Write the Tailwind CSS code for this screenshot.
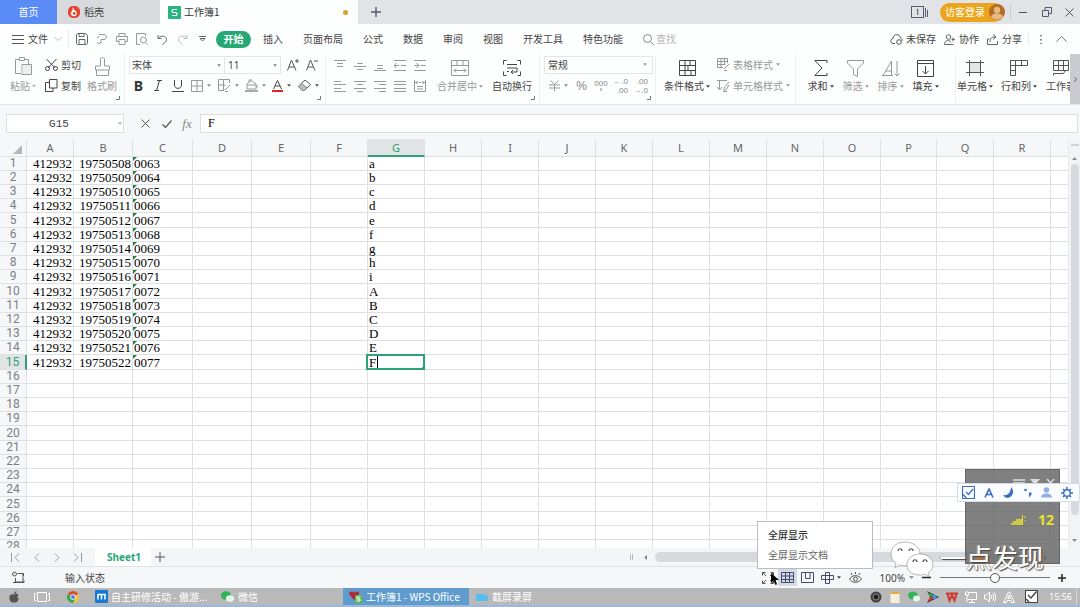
<!DOCTYPE html>
<html lang="zh-CN">
<head>
<meta charset="utf-8">
<title>工作簿1 - WPS Office</title>
<script src="https://cdn.jsdelivr.net/npm/@tailwindcss/browser@4"></script>
</head>
<body class="h-screen overflow-hidden bg-[#f5f7f9] font-['Noto_Sans_CJK_SC',sans-serif] text-[10px] leading-4 text-[#444]">
<svg class="hidden">
  <symbol id="dn" viewBox="0 0 5 3"><path d="M0 0h5L2.500 3z" fill="currentColor"/></symbol>
  <symbol id="corner" viewBox="0 0 5 5"><path d="M4.500 1v3.500H1" fill="none" stroke="#777"/></symbol>
</svg>
<div class="relative flex h-full flex-col whitespace-nowrap">

<!-- Title bar -->
<header class="flex h-6 shrink-0 items-center bg-[#e1e3e7]">
  <button class="h-full w-[57px] shrink-0 bg-[#5b8cf5] text-white">首页</button>
  <button class="flex h-full w-[103px] shrink-0 items-center gap-1 bg-[#d8dade] pl-[11px]">
    <svg class="size-3" viewBox="0 0 12 12"><rect width="12" height="12" rx="5" fill="#e8432a"/><path d="M4.500 1.500c2 1 1.500 2 2 2.700C9.500 5 10 10 6 10.200 2.500 10 2 7 4 5c.5-1 .8-2 .5-3.500z" fill="#fff"/><path d="M6 5.500L8 7.500 6 9.200 4.500 7.500z" fill="#e8432a"/></svg>
    稻壳</button>
  <button class="flex h-full w-[198px] shrink-0 items-center gap-[3px] bg-[#fdfefe] pr-[10px] pl-2 text-[#333]">
    <svg class="size-[13px]" viewBox="0 0 13 13"><rect width="13" height="13" rx="1" fill="#29b480"/><path d="M9 3.500H5.500c-2 0-2 3 0 3h2c2 0 2 3 0 3H4" fill="none" stroke="#fff" stroke-width="1.200"/></svg>
    工作簿1<span class="ml-auto size-[5px] rounded-full bg-[#d9a02c]"></span></button>
  <button aria-label="新建" class="flex w-9 shrink-0 justify-center"><svg class="size-[10px]" viewBox="0 0 10 10"><path d="M5 0v10M0 5h10" stroke="#555c78" stroke-width="1.400"/></svg></button>
  <div class="ml-auto flex h-full items-center">
    <button aria-label="窗口列表"><svg class="h-3 w-[17px]" viewBox="0 0 17 12" fill="none" stroke="#555c6e"><rect x=".5" y=".5" width="12" height="11"/><path d="M14.500 2v9M16.500 4v7M5.500 4l1.200-1v6"/></svg></button>
    <button class="mr-[6px] ml-3 flex h-[19px] w-[64px] items-center gap-1 rounded-full bg-[#eba51d] pl-[5px] text-white">访客登录
      <svg class="size-4 shrink-0" viewBox="0 0 16 16"><circle cx="8" cy="8" r="8" fill="#b36e23"/><circle cx="8" cy="6" r="3.200" fill="#e5b884"/><path d="M2 13c1-5 11-5 12 0a8 8 0 0 1-12 0z" fill="#e5b884"/></svg></button>
    <span class="h-4 border-l border-[#c9ccd0]"></span>
    <button aria-label="最小化" class="flex w-[25px] justify-center"><svg class="size-[9px]" viewBox="0 0 9 9"><path d="M0 4.500h8" stroke="#555"/></svg></button>
    <button aria-label="还原" class="flex w-[22px] justify-center"><svg class="size-[10px]" viewBox="0 0 10 10" fill="none" stroke="#555c6e"><path d="M.5 3.500h6v6h-6zM3 3V.5h6.500v6H7"/></svg></button>
    <button aria-label="关闭" class="flex w-[22px] justify-center"><svg class="size-[9px]" viewBox="0 0 9 9"><path d="M.5.500l8 8M8.500.500l-8 8" stroke="#555"/></svg></button>
  </div>
</header>

<!-- Menu bar -->
<nav class="flex h-[30px] shrink-0 items-center bg-[#fdfefe] pl-3">
  <button class="flex w-[56px] items-center gap-1"><svg class="h-[9px] w-3" viewBox="0 0 12 9"><path d="M0 .5h12M0 4.500h12M0 8.500h12" stroke="#555"/></svg>文件<svg class="ml-[2px] h-1 w-2" viewBox="0 0 8 4"><path d="M.5 0L4 3.500 7.500 0" fill="none" stroke="#bbb"/></svg></button>
  <div class="flex h-[18px] items-center border-l border-[#e8eaec] pl-[3px] text-[#999]">
    <button aria-label="保存" class="flex w-5 justify-center text-[#666]"><svg class="size-3" viewBox="0 0 12 12" fill="none" stroke="currentColor"><path d="M.5 1.500l1-1h8l2 2v8l-1 1h-9l-1-1zM3 .5v3h5v-3M3 11.500v-5h6v5"/></svg></button>
    <button aria-label="输出" class="flex w-5 justify-center"><svg class="size-3" viewBox="0 0 12 12" fill="none" stroke="currentColor"><path d="M3 1.500h5c3 0 3 5 0 5H5v4M1 9l2 2 2-2M1 5l2-2"/></svg></button>
    <button aria-label="打印" class="flex w-5 justify-center"><svg class="size-3" viewBox="0 0 12 12" fill="none" stroke="currentColor"><path d="M3 3.500v-3h6v3M3 8.500H.5v-5h11v5H9M3 6.500h6v5H3z"/></svg></button>
    <button aria-label="打印预览" class="flex w-5 justify-center"><svg class="size-3" viewBox="0 0 12 12" fill="none" stroke="currentColor"><path d="M4 11.500H.5V.5h9V3M10 10l1.700 1.700"/><circle cx="7.500" cy="7" r="3"/></svg></button>
    <button aria-label="撤销" class="flex w-5 justify-center text-[#666]"><svg class="size-[11px]" viewBox="0 0 11 11" fill="none" stroke="currentColor"><path d="M1 1v3.500h3.500M1.500 4C4 1 9.500 1.500 9.500 5.500c0 2-1.500 3-4 5"/></svg></button>
    <button aria-label="恢复" class="flex w-5 justify-center text-[#bbb]"><svg class="size-[11px]" viewBox="0 0 11 11" fill="none" stroke="currentColor"><path d="M10 1v3.500H6.500M9.500 4C7 1 1.500 1.500 1.500 5.500c0 2 1.500 3 4 5"/></svg></button>
    <button aria-label="更多" class="flex w-5 justify-center text-[#666]"><svg class="h-[6px] w-[7px]" viewBox="0 0 7 6" fill="none" stroke="currentColor"><path d="M0 .5h7M1 2.500h5L3.500 5z"/></svg></button>
  </div>
  <div class="flex items-center gap-5 pl-1">
    <button class="-mr-2 h-[17px] w-[35px] rounded-full bg-[#25a874] font-bold text-white">开始</button>
    <button>插入</button><button>页面布局</button><button>公式</button><button>数据</button><button>审阅</button><button>视图</button><button>开发工具</button><button>特色功能</button>
    <button class="flex items-center gap-[2px] text-[#b5b5b5]"><svg class="size-[11px]" viewBox="0 0 11 11" fill="none" stroke="#888"><circle cx="4.500" cy="4.500" r="4"/><path d="M7.500 7.500L11 11"/></svg>查找</button>
  </div>
  <div class="ml-auto flex items-center">
    <button class="flex w-[54px] items-center gap-[3px]"><svg class="h-[11px] w-[13px]" viewBox="0 0 13 11" fill="none" stroke="#555"><path d="M5 9.500H3C0 9 0 5 3 4.500 3.500-.5 10-.5 10.500 4c1.500.5 2 2 1.500 3"/><circle cx="9" cy="8" r="2.300"/></svg>未保存</button>
    <button class="flex w-[43px] items-center gap-1"><svg class="size-[11px]" viewBox="0 0 11 11" fill="none" stroke="#666"><circle cx="4.500" cy="3" r="2.300"/><path d="M.5 10.500c0-5 6-5 6-2M.5 10.500h9M7.500 5.500h3.500M9 3.500v4"/></svg>协作</button>
    <button class="flex w-[41px] items-center gap-1"><svg class="size-[11px]" viewBox="0 0 11 11" fill="none" stroke="#666"><path d="M2.500 5H.5v5.500h10V7M3 8c0-4 2-5 5-5M6 .5L9 3 6 5.500"/></svg>分享</button>
    <span class="h-3 border-l border-[#e8eaec]"></span>
    <button aria-label="选项" class="flex w-6 justify-center"><svg class="h-[9px] w-[2px]" viewBox="0 0 2 9"><path d="M1 0v1.500M1 4v1.500M1 8v1.500" stroke="#666" stroke-width="1.500"/></svg></button>
    <button aria-label="折叠功能区" class="mr-[11px] flex w-4 justify-center"><svg class="h-[6px] w-[11px]" viewBox="0 0 11 6"><path d="M.5 5.500l5-5 5 5" fill="none" stroke="#777"/></svg></button>
  </div>
</nav>

<!-- Ribbon -->
<section class="flex h-[51px] shrink-0 overflow-hidden border-b border-[#e3e5e7] bg-[#fdfefe]">
  <div class="relative flex w-[125px] shrink-0 border-r border-[#edeff0]">
    <button class="ml-2 flex w-[30px] flex-col items-center text-[#999]">
      <span class="flex h-6 items-center"><svg class="h-[19px] w-[17px]" viewBox="0 0 17 19" fill="none" stroke="#999"><path d="M6 16.500H.5V2.500h4M9.500 2.500h4V7M4.500.500h5v3h-5zM7 7.500h9.500v10H7z"/><path d="M7.500 8h8.500v9H7.500z" fill="#eee" stroke="none"/></svg></span>
      <span class="flex items-center gap-[2px]">粘贴<svg class="h-[2px] w-1"><use href="#dn"/></svg></span></button>
    <div class="ml-[7px] grid grid-rows-[21px_21px]">
      <button class="flex items-center gap-[3px]"><svg class="h-3 w-[13px]" viewBox="0 0 13 12" fill="none" stroke="#444"><path d="M1.500 0L10 9M11.500 0L3 9"/><circle cx="2.500" cy="9.500" r="2"/><circle cx="10.500" cy="9.500" r="2"/></svg>剪切</button>
      <button class="flex items-center gap-[3px]"><svg class="size-[13px]" viewBox="0 0 13 13" fill="none" stroke="#444"><path d="M4.500.5h7.500v8.500H4.500zM4.500 3.500H.5v9h7.500V9"/></svg>复制</button>
    </div>
    <button class="ml-[5px] flex w-[32px] flex-col items-center text-[#999]">
      <span class="flex h-6 items-center"><svg class="h-[19px] w-[15px]" viewBox="0 0 15 19" fill="none" stroke="#999"><path d="M5.500 9V2c0-2 4-2 4 0v7h5v4H.5V9zM1.500 13v5.500h12V13"/></svg></span>格式刷</button>
    <svg class="absolute right-1 bottom-1 size-[5px]"><use href="#corner"/></svg>
  </div>

  <div class="relative grid w-[201px] shrink-0 grid-rows-[21px_21px] border-r border-[#edeff0] pl-1">
    <div class="flex items-center">
      <label class="relative"><select aria-label="字体" class="h-[18px] w-[96px] appearance-none border border-[#e3e5e7] pl-[2px]"><option>宋体</option></select><svg class="pointer-events-none absolute top-2 right-1 h-[3px] w-1 text-[#888]"><use href="#dn"/></svg></label>
      <label class="relative"><select aria-label="字号" class="h-[18px] w-[56px] appearance-none border border-l-0 border-[#e3e5e7] pl-[3px] font-['Noto_Sans',sans-serif]"><option>11</option></select><svg class="pointer-events-none absolute top-2 right-1 h-[3px] w-1 text-[#888]"><use href="#dn"/></svg></label>
      <button aria-label="增大字号" class="ml-[6px]"><svg class="h-[13px] w-3" viewBox="0 0 12 13" fill="none" stroke="#555"><path d="M.5 12.500L4.500 2l4.500 10.500M2 9h5.500M8 3h4M10 1v4"/></svg></button>
      <button aria-label="减小字号" class="ml-[7px]"><svg class="h-[13px] w-3" viewBox="0 0 12 13" fill="none" stroke="#555"><path d="M.5 12.500L4.500 2l4.500 10.500M2 9h5.500M8 3h4"/></svg></button>
    </div>
    <div class="flex items-center text-[#888]">
      <button class="w-[19px] font-['Noto_Sans',sans-serif] text-[14px] font-bold text-[#333]">B</button>
      <button aria-label="斜体" class="flex w-5 justify-center"><svg class="h-[11px] w-2" viewBox="0 0 8 11"><path d="M3 .5h5M0 10.500h5M5.500.500l-3 10" fill="none" stroke="#444"/></svg></button>
      <button aria-label="下划线" class="flex w-5 justify-center"><svg class="h-3 w-3" viewBox="0 0 12 12"><path d="M2.500 0v5c0 4.500 7 4.500 7 0V0M0 11.500h12" fill="none" stroke="#444"/></svg></button>
      <button aria-label="边框" class="flex w-[27px] items-center gap-1 pl-[3px]"><svg class="size-3" viewBox="0 0 12 12"><path d="M.5.500h11v11H.5zM6 .5v11M.5 6h11" fill="none" stroke="#999"/></svg><svg class="h-[3px] w-1"><use href="#dn"/></svg></button>
      <button aria-label="绘制边框" class="flex w-[27px] items-center gap-1 pl-[3px]"><svg class="size-[13px]" viewBox="0 0 13 13"><path d="M6 11.500H.5V.5h11V4M.5 6h7M5.500.500v11M7 11l5-5M7 12.500h3" fill="none" stroke="#999"/></svg><svg class="h-[3px] w-1"><use href="#dn"/></svg></button>
      <button aria-label="填充颜色" class="flex w-[27px] items-center gap-1 pl-[3px]"><svg class="size-[13px]" viewBox="0 0 13 13"><path d="M2 5l4.500-3.500L11 5v5H2zM4 3V1h3M2 6h8.500M12 6v3" fill="none" stroke="#999"/><path d="M0 11h13v2H0z" fill="#aaa"/></svg><svg class="h-[3px] w-1"><use href="#dn"/></svg></button>
      <button aria-label="字体颜色" class="flex w-[27px] items-center gap-1 pl-[3px]"><svg class="h-3 w-[11px]" viewBox="0 0 11 12"><path d="M1.500 9L5.500.500 9.500 9M3 6h5" fill="none" stroke="#444"/><path d="M0 10h11v2H0z" fill="#d8262b"/></svg><svg class="h-[3px] w-1 text-[#555]"><use href="#dn"/></svg></button>
      <button aria-label="清除" class="flex items-center gap-1 pl-[2px]"><svg class="size-[13px]" viewBox="0 0 13 13"><path d="M.5 7L7 1l5.500 4.500-6 6H4zM3.500 4.500L9 9" fill="none" stroke="#555"/><path d="M1 7l2.500-2.500L9 9l-2.500 2.500H4z" fill="#bbb"/></svg><svg class="h-[3px] w-1 text-[#555]"><use href="#dn"/></svg></button>
    </div>
    <svg class="absolute right-1 bottom-1 size-[5px]"><use href="#corner"/></svg>
  </div>

  <div class="relative flex w-[214px] shrink-0 border-r border-[#edeff0] pl-1">
    <div class="grid w-[100px] grid-cols-5 grid-rows-[21px_21px] place-items-center">
      <button aria-label="顶端对齐"><svg class="size-3" viewBox="0 0 12 12"><path d="M0 1.500h12M3 4.500h6M3 7.500h6" stroke="#999"/></svg></button>
      <button aria-label="垂直居中"><svg class="size-3" viewBox="0 0 12 12"><path d="M3 4.500h6M0 7.500h12M3 10.500h6" stroke="#999"/></svg></button>
      <button aria-label="底端对齐"><svg class="size-3" viewBox="0 0 12 12"><path d="M3 6.500h6M3 9.500h6M0 11.500h12" stroke="#999"/></svg></button>
      <button aria-label="减少缩进"><svg class="size-3" viewBox="0 0 12 12" fill="none" stroke="#999"><path d="M0 1.500h12M7 6.500h5M0 11.500h12M0 6.500h5M2.500 4L0 6.500 2.500 9"/></svg></button>
      <button aria-label="增加缩进"><svg class="size-3" viewBox="0 0 12 12" fill="none" stroke="#999"><path d="M0 1.500h12M7 6.500h5M0 11.500h12M0 6.500h5M2.500 4L5 6.500 2.500 9"/></svg></button>
      <button aria-label="左对齐"><svg class="size-3" viewBox="0 0 12 12"><path d="M0 1.500h7M0 4.500h12M0 8.500h7M0 11.500h12" stroke="#999"/></svg></button>
      <button aria-label="水平居中"><svg class="size-3" viewBox="0 0 12 12"><path d="M0 1.500h12M3 4.500h6M0 8.500h12M3 11.500h6" stroke="#999"/></svg></button>
      <button aria-label="右对齐"><svg class="size-3" viewBox="0 0 12 12"><path d="M0 1.500h12M5 4.500h7M0 8.500h12M5 11.500h7" stroke="#999"/></svg></button>
      <button aria-label="两端对齐"><svg class="size-3" viewBox="0 0 12 12"><path d="M0 1.500h12M0 4.500h12M0 8.500h12M0 11.500h12" stroke="#999"/></svg></button>
      <button aria-label="分散对齐"><svg class="size-3" viewBox="0 0 12 12" fill="none" stroke="#999"><path d="M.5 0v11.500h11V0M3 1v3M9 1v3M.5 2.500h3M8.500 2.500h3M3 6.500h6M3 9h6M5 2.500h2"/></svg></button>
    </div>
    <button class="flex w-[60px] flex-col items-center text-[#999]">
      <span class="flex h-6 items-center pt-1"><svg class="h-4 w-[18px]" viewBox="0 0 18 16" fill="none" stroke="#999"><path d="M.5.500h17v15H.5zM.5 5.500h17M6 .5v5M12 .5v5M3 10.500h12M5 8.500l-2 2 2 2M13 8.500l2 2-2 2"/></svg></span>
      <span class="flex items-center gap-[2px]">合并居中<svg class="h-[3px] w-1"><use href="#dn"/></svg></span></button>
    <button class="flex w-[44px] flex-col items-center">
      <span class="flex h-6 items-center pt-1"><svg class="h-4 w-[18px]" viewBox="0 0 18 16" fill="none" stroke="#444"><path d="M3.500.500h-3v4M14.500.500h3v4M3.500 15.500h-3v-4M14.500 15.500h3v-4M4 4.500h10M4 8h10v4H8M10 10l-2 2 2 2M4 11.500h2"/></svg></span>自动换行</button>
    <svg class="absolute right-1 bottom-1 size-[5px]"><use href="#corner"/></svg>
  </div>

  <div class="relative grid w-[116px] shrink-0 grid-rows-[21px_21px] border-r border-[#edeff0] pl-1">
    <label class="relative flex items-center"><select aria-label="数字格式" class="h-[18px] w-[109px] appearance-none border border-[#e3e5e7] pl-[3px]"><option>常规</option></select><svg class="pointer-events-none absolute top-[9px] right-2 h-[3px] w-1 text-[#999]"><use href="#dn"/></svg></label>
    <div class="flex items-center font-['Liberation_Sans',sans-serif] text-[#888]">
      <button aria-label="货币" class="flex w-[28px] items-center gap-1 pl-[5px]"><svg class="h-[11px] w-[11px]" viewBox="0 0 11 11"><path d="M1.500.500l4 4 4-4M5.500 4.500V11M0 5h11M0 8h11" fill="none" stroke="#999"/></svg><svg class="h-[3px] w-1"><use href="#dn"/></svg></button>
      <button class="w-[19px] text-[12px]">%</button>
      <button aria-label="千位分隔" class="flex w-5 flex-col items-center text-[8px] leading-[9px]"><span>000</span><svg class="h-[5px] w-[2px]" viewBox="0 0 2 5"><path d="M1 0v3" stroke="#888"/></svg></button>
      <button class="flex w-5 flex-col items-end pr-[3px] text-[8px] leading-[9px]"><span>←.0</span><span>.00</span></button>
      <button class="flex w-5 flex-col items-end pr-[3px] text-[8px] leading-[9px]"><span>.00</span><span>→.0</span></button>
    </div>
    <svg class="absolute right-1 bottom-1 size-[5px]"><use href="#corner"/></svg>
  </div>

  <div class="flex w-[140px] shrink-0 border-r border-[#edeff0]">
    <button class="ml-2 flex w-[46px] flex-col items-center">
      <span class="flex h-6 items-center pt-1"><svg class="h-4 w-[17px]" viewBox="0 0 17 16" fill="none" stroke="#444"><path d="M.5.500h16v15H.5zM.5 5.500h16M.5 10.500h16M6 .5v15M11 .5v5M9 5.500v5M12 10.500v5"/></svg></span>
      <span class="flex items-center gap-[2px]">条件格式<svg class="h-[3px] w-1"><use href="#dn"/></svg></span></button>
    <div class="ml-[7px] grid grid-rows-[21px_21px] text-[#999]">
      <button class="flex items-center gap-[3px]"><svg class="size-[13px]" viewBox="0 0 13 13"><path d="M6 9.500H.5v-9h10V5M.5 3.500h10M.5 6.500h8M4 .5v9M7.500.500V7M7 11l5-5M7 12.500h3" fill="none" stroke="#999"/></svg>表格样式<svg class="h-[3px] w-1"><use href="#dn"/></svg></button>
      <button class="flex items-center gap-[3px]"><svg class="size-[13px]" viewBox="0 0 13 13"><path d="M0 1.500h10M2.500 1.500v9M0 8l2.500 3L5 8M12 3l-5 6v2h2l3-5M6 12.500h4" fill="none" stroke="#999"/></svg>单元格样式<svg class="h-[3px] w-1"><use href="#dn"/></svg></button>
    </div>
  </div>

  <div class="flex w-[160px] shrink-0 border-r border-[#edeff0] pl-[7px]">
    <button class="flex w-[35px] flex-col items-center"><span class="flex h-6 items-center pt-1"><svg class="h-4 w-[14px]" viewBox="0 0 14 16"><path d="M13 3V.5H.8L8 8 .8 15.500H13V13" fill="none" stroke="#444"/></svg></span><span class="flex items-center gap-[2px]">求和<svg class="h-[3px] w-1"><use href="#dn"/></svg></span></button>
    <button class="flex w-[35px] flex-col items-center text-[#999]"><span class="flex h-6 items-center pt-1"><svg class="h-[17px] w-[17px]" viewBox="0 0 17 17"><path d="M.5.500h16V3l-6 6v7.500l-4-2V9l-6-6z" fill="none" stroke="#999"/></svg></span><span class="flex items-center gap-[2px]">筛选<svg class="h-[3px] w-1"><use href="#dn"/></svg></span></button>
    <button class="flex w-[35px] flex-col items-center text-[#999]"><span class="flex h-6 items-center pt-1"><svg class="h-[17px] w-[18px]" viewBox="0 0 18 17"><path d="M1 15.500L9.500 1v14.500M4 11h5.500M0 15.500h11M15 1v15M12.500 13.500L15 16l2.500-2.500" fill="none" stroke="#999"/></svg></span><span class="flex items-center gap-[2px]">排序<svg class="h-[3px] w-1"><use href="#dn"/></svg></span></button>
    <button class="flex w-[35px] flex-col items-center"><span class="flex h-6 items-center pt-1"><svg class="h-[17px] w-[17px]" viewBox="0 0 17 17"><path d="M.5.500h16v16H.5zM.5 3.500h16M8.500 6v8M5.500 11l3 3 3-3" fill="none" stroke="#444"/></svg></span><span class="flex items-center gap-[2px]">填充<svg class="h-[3px] w-1"><use href="#dn"/></svg></span></button>
  </div>

  <div class="flex min-w-0 flex-1 overflow-hidden">
    <button class="flex w-[38px] shrink-0 flex-col items-center"><span class="flex h-6 items-center pt-1"><svg class="h-4 w-[18px]" viewBox="0 0 18 16" fill="none" stroke="#555"><path d="M3 3h12v10H3z" fill="#e5e5e5" stroke="none"/><path d="M0 2.500h18M0 12.500h18M3.500 0v16M14.500 0v16"/></svg></span><span class="flex items-center gap-[2px]">单元格<svg class="h-[3px] w-1"><use href="#dn"/></svg></span></button>
    <button class="ml-[6px] flex w-[38px] shrink-0 flex-col items-center"><span class="flex h-6 items-center pt-1"><svg class="h-4 w-[18px]" viewBox="0 0 18 16" fill="none" stroke="#555"><path d="M.5.500h17v5H.5zM.5.500v15h5V.5M.5 10.500h5M11.500.500v5"/></svg></span><span class="flex items-center gap-[2px]">行和列<svg class="h-[3px] w-1"><use href="#dn"/></svg></span></button>
    <button class="ml-[6px] flex w-[34px] shrink-0 flex-col items-center"><span class="flex h-6 items-center pt-1"><svg class="h-4 w-4" viewBox="0 0 16 16" fill="none" stroke="#555"><path d="M.5.500h15v10H.5zM.5 5.500h15M5.500.500v10M10.500.500v10M.5 15.500v-2h10l2-3"/></svg></span>工作表</button>
  </div>
  <button aria-label="向右滚动" class="flex h-full w-[10px] shrink-0 items-center justify-center bg-[#c9cbd0]"><svg class="h-[5px] w-[3px]" viewBox="0 0 3 5"><path d="M.5.500l2 2-2 2" fill="none" stroke="#555"/></svg></button>
</section>

<!-- Formula bar -->
<section class="flex h-[34px] shrink-0 items-center pt-[3px] pr-[2px] pl-[6px]">
  <label class="relative"><input aria-label="名称框" value="G15" class="h-[19px] w-[118px] border border-[#dcdfe2] bg-white pr-3 text-center font-['Liberation_Mono','Noto_Sans_CJK_SC',monospace] text-[11px]"><svg class="pointer-events-none absolute top-2 right-[2px] h-[3px] w-1 text-[#aaa]"><use href="#dn"/></svg></label>
  <button aria-label="取消" class="ml-[17px]"><svg class="size-[9px]" viewBox="0 0 9 9"><path d="M.5.500l8 8M8.500.500l-8 8" stroke="#555"/></svg></button>
  <button aria-label="输入" class="ml-3"><svg class="h-2 w-[10px]" viewBox="0 0 10 8"><path d="M.5 4.500L3.500 7.500 9.500.500" fill="none" stroke="#555" stroke-width="1.200"/></svg></button>
  <button class="ml-[2px] w-[26px] font-['Liberation_Serif',serif] text-[13px] text-[#888] italic">fx</button>
  <input aria-label="编辑栏" value="F" class="h-[19px] min-w-0 flex-1 border border-[#dcdfe2] bg-white pl-[7px] font-['Liberation_Serif',serif] text-[12px] text-black">
</section>

<!-- Sheet -->
<main class="flex min-h-0 flex-1">
  <div class="min-w-0 flex-1 overflow-hidden">
    <table class="w-full table-fixed border-separate border-spacing-0 text-[11px] leading-[13px]">
      <colgroup><col class="w-[27px]"><col class="w-[47px]"><col class="w-[59px]"><col class="w-[60px]"><col class="w-[59px]"><col class="w-[59px]"><col class="w-[57px]"><col class="w-[57px]"><col class="w-[57px]"><col class="w-[57px]"><col class="w-[57px]"><col class="w-[57px]"><col class="w-[57px]"><col class="w-[57px]"><col class="w-[57px]"><col class="w-[57px]"><col class="w-[56px]"><col class="w-[57px]"><col class="w-[57px]"><col></colgroup>
      <thead><tr id="cols"><th class="h-[18px] border-r border-b border-[#dde1e4] p-0"><svg class="mt-1 mr-1 ml-auto size-[9px]" viewBox="0 0 9 9"><path d="M9 0v9H0z" fill="#b3b6ba"/></svg></th></tr></thead>
      <tbody id="rows"></tbody>
    </table>
  </div>
  <div class="flex w-3 shrink-0 flex-col items-center border-l border-[#e8eaec] bg-[#f1f3f5] text-[#888]">
    <span class="mt-[5px] h-[2px] w-2 bg-[#cfd2d6]"></span>
    <svg class="mt-[11px] h-[3px] w-[5px] rotate-180"><use href="#dn"/></svg>
    <span class="mt-1 w-2 flex-1 rounded-full bg-[#d7d9de]"></span>
    <svg class="mt-6 mb-[6px] h-[3px] w-[5px]"><use href="#dn"/></svg>
  </div>
</main>

<!-- Sheet tabs -->
<section class="flex h-[19px] shrink-0 items-center border-b border-[#dfe2e5] bg-[#f3f5f7] pl-[11px]">
  <button aria-label="第一张" class="flex w-[20px] items-center"><svg class="size-[9px]" viewBox="0 0 9 9"><path d="M.5 0v9M8 .5l-4 4 4 4" fill="none" stroke="#999"/></svg></button>
  <button aria-label="上一张" class="flex w-[21px] pl-[2px]"><svg class="size-[9px]" viewBox="0 0 9 9"><path d="M6 .5l-4 4 4 4" fill="none" stroke="#999"/></svg></button>
  <button aria-label="下一张" class="flex w-[21px]"><svg class="size-[9px]" viewBox="0 0 9 9"><path d="M3 .5l4 4-4 4" fill="none" stroke="#999"/></svg></button>
  <button aria-label="最后一张" class="flex w-[22px]"><svg class="size-[9px]" viewBox="0 0 9 9"><path d="M8.500 0v9M1 .5l4 4-4 4" fill="none" stroke="#999"/></svg></button>
  <button class="h-full w-[56px] bg-white pl-[2px] font-['Noto_Sans',sans-serif] font-bold text-[#25a874]">Sheet1</button>
  <button aria-label="新建工作表" class="ml-1"><svg class="size-[10px]" viewBox="0 0 10 10"><path d="M5 0v10M0 5h10" stroke="#555"/></svg></button>
  <div class="ml-auto flex w-[450px] items-center text-[#888]">
    <span class="h-[6px] w-[3px] border-x border-[#b5b8bc]"></span>
    <svg class="ml-[10px] h-[3px] w-[5px] rotate-90"><use href="#dn"/></svg>
    <span class="ml-[7px] h-[10px] w-[384px] rounded-full bg-[#d7d9de]"></span>
    <svg class="ml-1 h-[3px] w-[5px] -rotate-90"><use href="#dn"/></svg>
  </div>
</section>

<!-- Status bar -->
<section class="flex h-[21px] shrink-0 items-center pl-3">
  <svg class="size-[13px]" viewBox="0 0 13 13" fill="none" stroke="#555"><circle cx="2.500" cy="3" r="2"/><path d="M5.500 2.500h6V5M11 2.500v8.500H3.500v-4M1 11.500h11v-2M2.500 3h.5"/></svg>
  <span class="ml-10">输入状态</span>
  <div class="ml-auto flex items-center">
    <button aria-label="全屏显示" class="flex w-[19px] justify-center"><svg class="size-3" viewBox="0 0 12 12" fill="none" stroke="#555"><path d="M.5 3.500v-3h3M8.500.500h3v3M.5 8.500v3h3M8.500 11.500h3v-3M1 1l3 3M11 1L8 4M1 11l3-3M11 11L8 8"/></svg></button>
    <button aria-label="普通视图" class="flex h-[17px] w-[19px] items-center justify-center bg-[#d5d9e6]"><svg class="h-[11px] w-[13px]" viewBox="0 0 13 11" fill="none" stroke="#444a6a"><path d="M.5.500h12v10H.5zM.5 4h12M.5 7.500h12M4.500.500v10M8.500.500v10"/></svg></button>
    <button aria-label="分页预览" class="flex w-[22px] justify-center"><svg class="h-[11px] w-[13px]" viewBox="0 0 13 11" fill="none" stroke="#444a6a"><path d="M.5.500h12v10H.5zM4.500.500v6h5M9 .5v6"/></svg></button>
    <button aria-label="阅读模式" class="flex w-[24px] items-center justify-center gap-[3px]"><svg class="h-3 w-[13px]" viewBox="0 0 13 12" fill="none" stroke="#444a6a"><path d="M.5 3.500h12v4H.5zM4.500.500h4v11h-4z"/></svg><svg class="h-[3px] w-1 shrink-0"><use href="#dn"/></svg></button>
    <button aria-label="护眼模式" class="flex w-[26px] justify-center"><svg class="h-3 w-[13px]" viewBox="0 0 13 12" fill="none" stroke="#555"><path d="M.5 7c3-4.500 9-4.500 12 0-3 4.500-9 4.500-12 0zM6.500 0v2M2 1l1 2M11 1l-1 2"/><circle cx="6.500" cy="7" r="2"/></svg></button>
    <button class="ml-[11px] flex items-center gap-1 font-['Noto_Sans',sans-serif]">100%<svg class="h-[3px] w-[5px] text-[#999]"><use href="#dn"/></svg></button>
    <button aria-label="缩小" class="ml-2"><svg class="size-[9px]" viewBox="0 0 9 9"><path d="M0 4.500h9" stroke="#222" stroke-width="1.500"/></svg></button>
    <input type="range" aria-label="缩放" min="0" max="100" value="50" class="ml-[9px] h-[10px] w-[110px] appearance-none bg-[linear-gradient(#777,#777)] bg-[length:100%_1px] bg-center bg-no-repeat [&::-webkit-slider-thumb]:size-[10px] [&::-webkit-slider-thumb]:appearance-none [&::-webkit-slider-thumb]:rounded-full [&::-webkit-slider-thumb]:border [&::-webkit-slider-thumb]:border-[#555] [&::-webkit-slider-thumb]:bg-white">
    <button aria-label="放大" class="mr-[14px] ml-2"><svg class="size-[8px]" viewBox="0 0 8 8"><path d="M4 0v8M0 4h8" stroke="#222" stroke-width="1.500"/></svg></button>
  </div>
</section>

<!-- Taskbar -->
<footer class="flex h-[19px] shrink-0 items-center border-b-2 border-[#9ab9dc] bg-[#b9b9ba] pl-2 text-white">
  <button aria-label="开始菜单"><svg class="size-3" viewBox="0 0 12 12"><path d="M6 3.500c2-1.200 4-.5 4.500.5-1.500 1-1.200 3 .3 3.800C9 12.500 7.500 11.500 6 11.200c-1.500.3-2.500 1-4-1.700C.5 6 1.500 2.500 6 3.500zM6 3c0-1.500 1-2.500 2.500-3C8.500 1.500 7.500 2.800 6 3z" fill="#555"/></svg></button>
  <button aria-label="任务视图" class="ml-[14px]"><svg class="h-[10px] w-4" viewBox="0 0 16 10" fill="none" stroke="#fff"><path d="M3.500.500h9v9h-9zM2 1.500H.5v7H2M14 1.500h1.500v7H14"/></svg></button>
  <button aria-label="Chrome" class="ml-[17px]"><svg class="size-3" viewBox="0 0 12 12"><circle cx="6" cy="6" r="6" fill="#f4c430"/><path d="M6 6L.8 3A6 6 0 0 1 11.200 3z" fill="#de4b3b"/><path d="M6 6L.8 3A6 6 0 0 0 6 12l2-4z" fill="#36a853"/><circle cx="6" cy="6" r="2.800" fill="#fff"/><circle cx="6" cy="6" r="2.100" fill="#4285f4"/></svg></button>
  <button class="ml-[16px] flex w-[126px] items-center gap-[3px]"><svg class="size-[13px]" viewBox="0 0 13 13"><rect width="13" height="13" rx="1" fill="#1478d4"/><path d="M3 9.500V4.500h7v5M6.500 4.500v5" fill="none" stroke="#fff" stroke-width="1.500"/></svg>自主研修活动 - 傲游...</button>
  <button class="flex w-[122px] items-center gap-1"><svg class="h-[11px] w-[13px]" viewBox="0 0 13 11"><ellipse cx="5" cy="4.500" rx="5" ry="4.200" fill="#2fb457"/><ellipse cx="9" cy="7.500" rx="4" ry="3.300" fill="#e8f5ea"/></svg>微信</button>
  <button class="flex h-full w-[126px] items-center gap-1 bg-[#5f9bcd] pl-[6px]"><svg class="h-3 w-[13px]" viewBox="0 0 13 12"><path d="M0 3c0-3 4-3 5-1 1-2 6-2 5 1L5 9z" fill="#b3263a"/><rect x="6" y="4" width="7" height="8" fill="#5cb947"/><path d="M11.500 6H8v2h3v2H7.500" fill="none" stroke="#fff"/></svg>工作簿1 - WPS Office</button>
  <button class="ml-[7px] flex items-center gap-1"><svg class="h-[8px] w-3" viewBox="0 0 12 8"><path d="M0 1h8l4 2v5H0z" fill="#55bdf0"/></svg>截屏录屏</button>
  <div class="ml-auto flex items-center gap-[7px] font-['Noto_Sans',sans-serif]">
    <svg class="size-3" viewBox="0 0 12 12"><circle cx="6" cy="6" r="5.500" fill="#444"/><circle cx="6" cy="6" r="3" fill="#222" stroke="#888"/></svg>
    <svg class="size-3" viewBox="0 0 12 12"><path d="M1.500 1h9v11h-9z" fill="#f5f0df"/><path d="M1.500 1h9v2h-9z" fill="#e3ad3c"/></svg>
    <svg class="size-3" viewBox="0 0 12 12"><ellipse cx="5" cy="4.500" rx="5" ry="4" fill="#2fb457"/><ellipse cx="8.500" cy="7.500" rx="3.500" ry="3" fill="#e8f5ea"/></svg>
    <svg class="size-3" viewBox="0 0 12 12"><path d="M0 0l12 6-12 6 3-6z" fill="#333"/><path d="M1 1.500l7 3-5 1.500z" fill="#36a853"/><path d="M3 6l4 1-6 4z" fill="#d33"/><circle cx="7.500" cy="6" r="2.300" fill="#4a90d9"/></svg>
    <svg class="size-3" viewBox="0 0 12 12"><path d="M0 2.500h12M1.500 3l2 6.500L6 4l2.500 5.500 2-6.500" fill="none" stroke="#cb3a2c" stroke-width="2"/></svg>
    <svg class="size-3" viewBox="0 0 12 12" fill="none" stroke="#fff"><path d="M3 1.500h8.500v7H3M7 8.500v2.500M4 11.500h6M.5 1h3v3h-3zM2 4v7"/></svg>
    <svg class="size-3" viewBox="0 0 12 12" fill="none" stroke="#fff"><path d="M.5 4v4h2l3 3V1l-3 3zM7 4q1.500 2 0 4M8.500 2.500q3 3.500 0 7M10.500 1.500q3 4.500 0 9"/></svg>
    <svg class="size-3" viewBox="0 0 12 12" fill="none" stroke="#fff"><path d="M.5 11.500L5.500 1h1l5 10.500H8.500L8 9.500H4l-.5 2zM4.500 7.500h3L6 4z"/></svg>
    <svg class="ml-[3px] size-[13px]" viewBox="0 0 13 13"><rect x=".5" y=".5" width="12" height="12" fill="#fff" stroke="#444"/><path d="M3 5l3 3 5.500-6.500M1 9l3 3" fill="none" stroke="#444" stroke-width="1.400"/></svg>
    <span class="ml-1 text-[9px]">15:56</span>
    <span class="-ml-[3px] h-4 w-1 border-l border-[#d8d8d8]"></span>
  </div>
</footer>

<!-- Floating desktop widget -->
<aside class="absolute right-5 bottom-[43px] h-[95px] w-[95px] border border-[#666] bg-[#606060]/80">
  <svg class="absolute top-[9px] right-1 h-2 w-[42px]" viewBox="0 0 42 8"><path d="M0 1h12M0 4h12M34 0l7 8M41 0l-7 8" stroke="#ddd" stroke-width="1.500"/><path d="M17 0h10l-5 6z" fill="#ddd"/></svg>
  <div class="absolute right-[5px] bottom-[35px] flex items-center gap-3 text-[#e8e22c]">
    <svg class="h-[10px] w-[15px]" viewBox="0 0 15 10"><path d="M0 9h11M2 7h9M5 5h6" stroke="#e8e22c" stroke-width="1.500"/><path d="M11.500 0v10M14 1v2M14 5v1" stroke="#e8e22c"/></svg>
    <span class="font-['Noto_Sans',sans-serif] text-[14px] font-bold">12</span>
  </div>
  <span class="absolute bottom-1 left-[10px] h-[2px] w-[9px] bg-[#c46a24]"></span>
  <span class="absolute bottom-1 left-8 h-[2px] w-2 bg-[#3aa23a]"></span>
</aside>

<!-- Input method bar -->
<aside class="absolute right-0 bottom-[105px] flex h-[19px] w-[123px] items-center justify-between border border-[#d4dcea] bg-[#fafcff] pr-[6px] pl-1">
  <svg class="size-[13px]" viewBox="0 0 13 13" fill="none" stroke="#3a6cc8"><path d="M.5.500h12v12H.5zM4 6l2.500 2.500L11 3M1 8.500l3.500 3.500" stroke-width="1.200"/></svg>
  <svg class="h-[10px] w-[10px]" viewBox="0 0 10 10" fill="none" stroke="#3a6cc8" stroke-width="1.600"><path d="M1 9.500L5 1l4 8.500M2.500 6.500h5"/></svg>
  <svg class="size-[11px]" viewBox="0 0 11 11"><path d="M8 0c4 4 2 10-3 11-2 0-4-1-5-3 4 1 8-2 8-8z" fill="#3a6cc8"/></svg>
  <svg class="h-[10px] w-2" viewBox="0 0 8 10"><circle cx="1.500" cy="2" r="1.300" fill="#3a6cc8"/><path d="M5 4.500h2.500v2L5 9.500" fill="#3a6cc8"/></svg>
  <svg class="size-[11px]" viewBox="0 0 11 11" fill="#8fb0e6"><circle cx="5.500" cy="3" r="2.800"/><path d="M0 10.500c0-5.500 11-5.500 11 0z"/></svg>
  <svg class="size-3" viewBox="0 0 12 12" fill="none" stroke="#3a6cc8"><circle cx="6" cy="6" r="3.300" stroke-width="1.400"/><path d="M6 0v2M6 10v2M0 6h2M10 6h2M2 2l1.300 1.300M8.700 8.700L10 10M2 10l1.300-1.300M8.700 3.300L10 2" stroke-width="1.500"/></svg>
</aside>

<!-- Watermark -->
<div class="absolute right-9 bottom-7 flex items-start gap-[6px]">
  <svg class="h-[38px] w-[44px]" viewBox="0 0 44 38" stroke="#999" stroke-width=".7"><path d="M15 1C6 1 1 7 1 13c0 4 2 7 5 9l-1 5 5-3c3 1 6 1 9 0 8-1 11-6 11-11C30 6 23 1 15 1z" fill="#fff"/><path d="M30 13c-8 0-13 5-13 11s5 10 13 10c2 0 3 0 5-1l4 3-1-4c3-2 5-5 5-8 0-6-5-11-13-11z" fill="#fff"/><path d="M8 10c0-3 4-3 4 0M19 10c0-3 4-3 4 0M23 21c0-3 4-3 4 0M33 21c0-3 4-3 4 0" fill="none" stroke="#555" stroke-width="1.200"/></svg>
  <span class="text-[26px] leading-[32px] text-white [text-shadow:1px_1px_1px_#444,-1px_0_1px_#aaa]">一点发现</span>
</div>

<!-- Tooltip -->
<div role="tooltip" class="absolute right-[207px] bottom-[38px] flex h-12 w-[116px] flex-col justify-center gap-1 border border-[#b9bcc0] bg-white pl-[10px]">
  <strong class="font-medium text-[#333]">全屏显示</strong><span class="text-[#666]">全屏显示文档</span>
</div>
<svg class="absolute right-[301px] bottom-[22px] h-3 w-2" viewBox="0 0 8 12"><path d="M0 0v10l2.500-2.500L4.500 12l1.500-.8L4.500 7H8z" fill="#000"/></svg>
</div>

<script>
const letters = 'ABCDEFGHIJKLMNOPQR'.split('');
const values = 'abcdefghiABCDEF'.split('');
const head = letters.map(c => c === 'G'
  ? `<th class="border-r border-b-2 border-[#dde1e4] border-b-[#2ba377] bg-[#e1e3e4] p-0 pt-px font-['Noto_Sans',sans-serif] font-normal text-[#2ba377]">G</th>`
  : `<th class="border-r border-b border-[#dde1e4] p-0 font-['Noto_Sans',sans-serif] font-normal text-[#666]">${c}</th>`);
document.getElementById('cols').insertAdjacentHTML('beforeend', head.join('') + `<th class="border-b border-[#dde1e4] p-0"></th>`);

const mark = `<svg class="absolute top-0 left-0 size-1" viewBox="0 0 4 4"><path d="M0 0h4L0 4z" fill="#1d8048"/></svg>`;
const cursor = `<span class="absolute -top-px -right-px -bottom-px -left-[2px] border-2 border-[#2ba377]"></span><span class="absolute top-[1px] left-[9px] h-3 border-l border-black"></span><span class="absolute -right-[2px] -bottom-[2px] size-1 bg-[#2ba377]"></span>`;
let html = '';
for (let r = 1; r <= 28; r++) {
  html += `<tr class="h-[14px] nth-[5n]:h-[15px]">`;
  html += r === 15
    ? `<th class="border-r-2 border-b border-[#dde1e4] border-r-[#2ba377] bg-[#e1e3e4] p-0 font-['Roboto',sans-serif] text-[12px] font-normal text-[#2ba377]">15</th>`
    : `<th class="border-r border-b border-[#dde1e4] bg-[#f5f7f9] p-0 font-['Roboto',sans-serif] text-[12px] font-normal text-[#7a7f85]">${r}</th>`;
  for (const c of letters) {
    let text = '', extra = '';
    if (r <= 15) {
      if (c === 'A') text = '412932';
      if (c === 'B') text = String(19750507 + r);
      if (c === 'C') { text = '00' + (62 + r); extra = mark; }
      if (c === 'G') text = values[r - 1];
      if (c === 'G' && r === 15) extra = cursor;
    }
    const side = c === 'A' || c === 'B' ? `text-right pr-[1px]` : `text-left pl-[1px]`;
    html += `<td class="relative border-r border-b border-[#dde1e4] bg-white p-0 font-['Liberation_Serif',serif] text-[13px] text-black ${side}">${text}${extra}</td>`;
  }
  html += `<td class="border-b border-[#dde1e4] bg-white p-0"></td></tr>`;
}
document.getElementById('rows').innerHTML = html;
</script>
</body>
</html>
